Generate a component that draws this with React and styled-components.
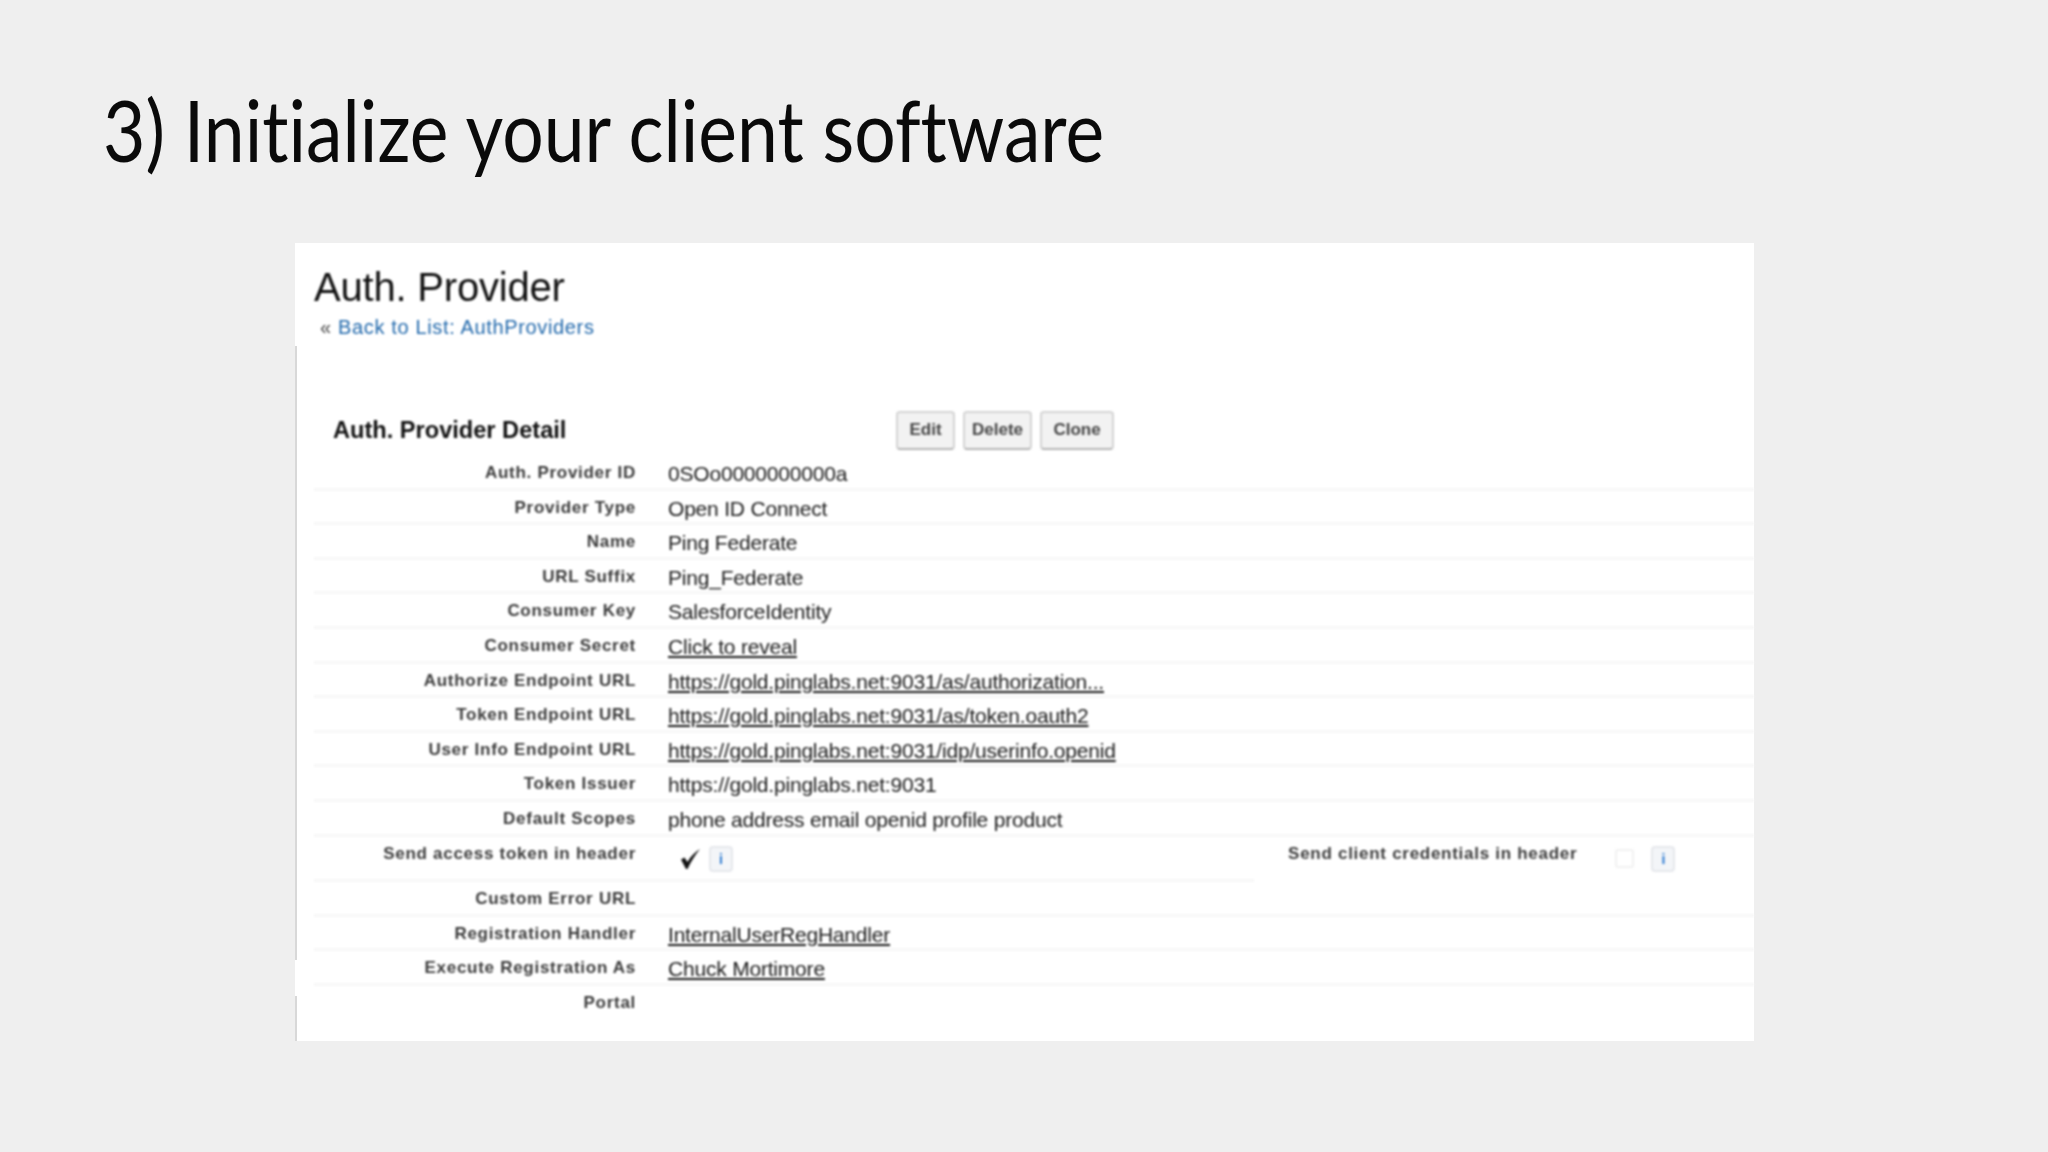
import React from "react";
import styled, { createGlobalStyle } from "styled-components";

const Global = createGlobalStyle`
  html, body { margin: 0; padding: 0; background: #efefef; }
  body { width: 2048px; height: 1152px; overflow: hidden; font-family: "Liberation Sans", Arial, sans-serif; }
`;
const Page = styled.div`
  width: 2048px; height: 1152px; box-sizing: border-box; background: #efefef;
  padding: 78px 0 0 103px; display: flex; flex-direction: column;
`;
const Title = styled.h1`
  margin: 0; height: 165px; font-family: "Lato", sans-serif; font-weight: 400; font-size: 86px; line-height: 102px;
  font-variant-ligatures: none; color: #0a0a0a; white-space: nowrap; transform-origin: 0 0; transform: scaleX(0.852); filter: blur(0.6px);
`;
const Panel = styled.section`
  margin-left: 192px; width: 1459px; height: 798px; box-sizing: border-box; background: #fff;
  padding: 18px 0 0 17px; color: #222;
  border-left: 2px solid;
  border-image: linear-gradient(to bottom, #fff 0 13%, #d8d8d8 13% 89.8%, #fff 89.8% 94.3%, #d8d8d8 94.3% 100%) 1;
`;
const Blurred = styled.div` filter: blur(0.9px); `;
const Heading = styled.h2`
  margin: 0; font-weight: 400; font-size: 40px; line-height: 52px; color: #111; letter-spacing: -0.2px;
`;
const BackLine = styled.div`
  margin: 2px 0 0 6px; font-size: 20px; line-height: 24px; color: #444; letter-spacing: 0.65px;
`;
const BackLink = styled.a` color: #1f67ab; `;
const DetailBar = styled.div`
  margin-top: 71px; height: 40px; display: flex; align-items: center; padding-left: 19px;
`;
const DetailTitle = styled.h3`
  margin: 0; width: 563px; font-size: 23.6px; font-weight: 700; color: #111; white-space: nowrap;
`;
const Buttons = styled.div` display: flex; gap: 8px; `;
const Button = styled.button`
  height: 39px; width: ${p => p.$w}px; padding: 0; box-sizing: border-box; font: 700 17px "Liberation Sans", sans-serif; color: #444;
  background: #f2f2f2; border: 2px solid #d4d4d4; border-bottom-color: #b5b5b5; border-radius: 4px;
`;
const Rows = styled.div` margin-top: 6px; `;
const Row = styled.div`
  display: flex; height: ${p => p.$h || 34.6}px; box-sizing: border-box;
  border-bottom: ${p => p.$plain ? "none" : "3px solid #f7f7f7"};
`;
const Half = styled.div`
  display: flex; height: 100%; box-sizing: border-box;
  width: ${p => p.$w}px;
  border-bottom: ${p => p.$line ? "3px solid #f7f7f7" : "none"};
`;
const Label = styled.div`
  width: ${p => p.$w || 322}px; flex: none; text-align: right; box-sizing: border-box; padding-top: 6px;
  font-size: 17px; line-height: 22px; font-weight: 700; color: #3a3a3a; letter-spacing: 0.72px; white-space: nowrap;
`;
const Value = styled.div`
  margin-left: 32px; padding-top: 6px; font-size: 21px; line-height: 23px; color: #1a1a1a; white-space: nowrap; letter-spacing: -0.2px;
`;
const ValueLink = styled.a` color: #1a1a1a; text-decoration: underline; `;
const Controls = styled.div`
  display: flex; align-items: center; gap: ${p => p.$gap}px; margin-left: ${p => p.$left}px; height: 22px; margin-top: 11px;
`;
const Check = styled.span`
  width: 26px; height: 24px; display: flex; align-items: center; justify-content: center; color: #111;
`;
const EmptyBox = styled.span`
  width: 19px; height: 19px; border: 2px solid #f1f1f1; border-radius: 3px; box-sizing: border-box;
`;
const Info = styled.span`
  width: 24px; height: 26px; flex: none; box-sizing: border-box; background: #f3f5f8; border: 2px solid #e6e8ec; border-radius: 4px;
  display: flex; align-items: center; justify-content: center; font: 700 14px "Liberation Sans", sans-serif; color: #2a78d0;
`;

const rows = [
  ["Auth. Provider ID", "0SOo0000000000a"],
  ["Provider Type", "Open ID Connect"],
  ["Name", "Ping Federate"],
  ["URL Suffix", "Ping_Federate"],
  ["Consumer Key", "SalesforceIdentity"],
  ["Consumer Secret", "Click to reveal", true],
  ["Authorize Endpoint URL", "https://gold.pinglabs.net:9031/as/authorization...", true],
  ["Token Endpoint URL", "https://gold.pinglabs.net:9031/as/token.oauth2", true],
  ["User Info Endpoint URL", "https://gold.pinglabs.net:9031/idp/userinfo.openid", true],
  ["Token Issuer", "https://gold.pinglabs.net:9031"],
  ["Default Scopes", "phone address email openid profile product"],
];
const rowsAfter = [
  ["Custom Error URL", ""],
  ["Registration Handler", "InternalUserRegHandler", true],
  ["Execute Registration As", "Chuck Mortimore", true],
];

const DataRow = ({ label, value, link, plain }) => (
  <Row $plain={plain}>
    <Label>{label}</Label>
    <Value>{link ? <ValueLink>{value}</ValueLink> : value}</Value>
  </Row>
);

export default function App() {
  return (
    <Page>
      <Global />
      <Title>3) Initialize your client software</Title>
      <Panel>
        <Blurred>
          <Heading>Auth. Provider</Heading>
          <BackLine>« <BackLink>Back to List: AuthProviders</BackLink></BackLine>
          <DetailBar>
            <DetailTitle>Auth. Provider Detail</DetailTitle>
            <Buttons>
              <Button $w={59}>Edit</Button>
              <Button $w={69}>Delete</Button>
              <Button $w={74}>Clone</Button>
            </Buttons>
          </DetailBar>
          <Rows>
            {rows.map(([l, v, k]) => <DataRow key={l} label={l} value={v} link={k} />)}
            <Row $h={45.7} $plain>
              <Half $w={941} $line>
                <Label>Send access token in header</Label>
                <Controls $left={41} $gap={6}>
                  <Check>
                    <svg width="26" height="24" viewBox="0 0 26 24"><path d="M4 12.5 L7.5 10.5 L10.5 15 C14 9 18 5 23 2 C19 7 14 14 10.5 22 L9 22 Z" fill="#111" /></svg>
                  </Check>
                  <Info>i</Info>
                </Controls>
              </Half>
              <Half $w={500}>
                <Label $w={323}>Send client credentials in header</Label>
                <Controls $left={38} $gap={17}>
                  <EmptyBox />
                  <Info>i</Info>
                </Controls>
              </Half>
            </Row>
            {rowsAfter.map(([l, v, k]) => <DataRow key={l} label={l} value={v} link={k} />)}
            <DataRow label="Portal" value="" plain />
          </Rows>
        </Blurred>
      </Panel>
    </Page>
  );
}
